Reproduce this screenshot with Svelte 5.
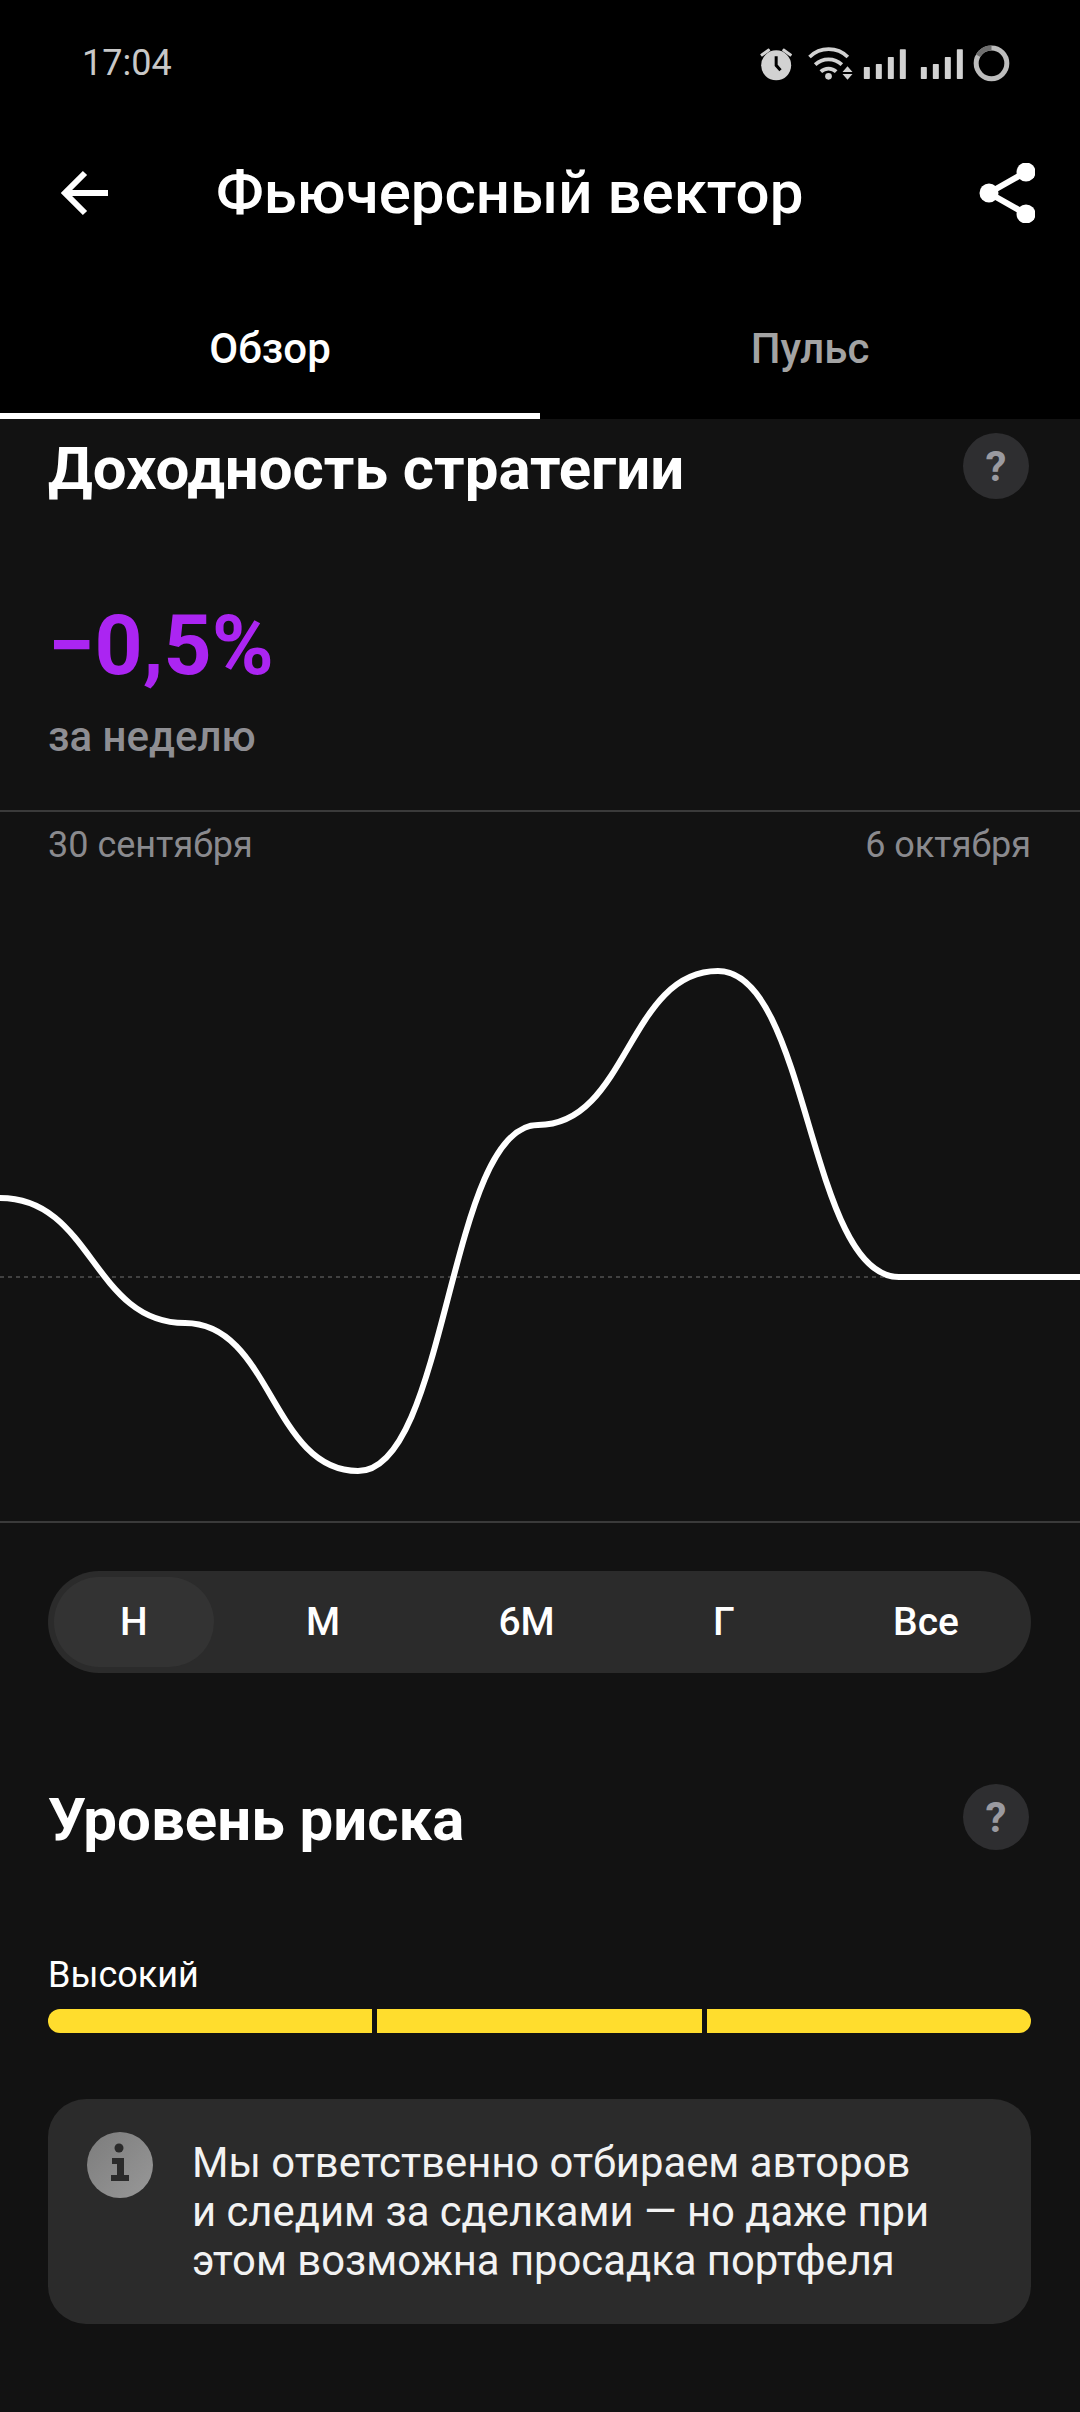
<script>
  const periods = ['Н', 'М', '6М', 'Г', 'Все'];
  const points = [[0,118],[185,243],[358,391],[538,45],[718,-109],[899,197],[1080,197]];
  const curve = points.reduce((d, [x, y], i) => {
    if (i === 0) return `M${x} ${y}`;
    const [px, py] = points[i - 1];
    const k = (x - px) * 0.5;
    return `${d} C${px + k} ${py} ${x - k} ${y} ${x} ${y}`;
  }, '');
</script>

<div class="screen">
  <header class="top">
    <div class="status">
      <span class="time">17:04</span>
      <svg class="status-icons" viewBox="60 60 770 120" aria-hidden="true">
        <g fill="#d2d2d2">
          <circle cx="111" cy="130" r="45"/>
          <rect x="62" y="87" width="32" height="9" rx="2" transform="rotate(-35 78 91)"/>
          <rect x="128" y="87" width="32" height="9" rx="2" transform="rotate(35 144 91)"/>
          <circle cx="268" cy="163" r="10"/>
          <path d="M310 150h30l-15 -17zM310 156h30l-15 17z"/>
          <rect x="374" y="135" width="18" height="36" rx="2"/>
          <rect x="410" y="126" width="18" height="45" rx="2"/>
          <rect x="446" y="105" width="18" height="66" rx="2"/>
          <rect x="482" y="82" width="18" height="89" rx="2"/>
          <rect x="545" y="135" width="18" height="36" rx="2"/>
          <rect x="581" y="126" width="18" height="45" rx="2"/>
          <rect x="617" y="105" width="18" height="66" rx="2"/>
          <rect x="653" y="82" width="18" height="89" rx="2"/>
        </g>
        <path d="M111 103v27l13 15" fill="none" stroke="#000" stroke-width="9"/>
        <g fill="none" stroke="#d2d2d2" stroke-width="11">
          <path d="M211 105a82 82 0 0 1 115 0"/>
          <path d="M228 128a58 58 0 0 1 80 0"/>
          <path d="M245 149a33 33 0 0 1 46 0"/>
        </g>
        <circle cx="757" cy="124" r="46" fill="none" stroke="#bdbdbd" stroke-width="15"/>
        <path d="M717 101a46 46 0 0 1 40 -23" fill="none" stroke="#6e6e6e" stroke-width="15"/>
      </svg>
    </div>
    <div class="nav">
      <svg class="back" viewBox="0 0 48 46" aria-hidden="true">
        <path d="M48 23H5M25 3L5 23l20 20" fill="none" stroke="#fff" stroke-width="6"/>
      </svg>
      <h1>Фьючерсный вектор</h1>
      <svg class="share" viewBox="0 0 56 60" aria-hidden="true">
        <g fill="#fff">
          <circle cx="47" cy="9" r="9.5"/>
          <circle cx="47" cy="51" r="9.5"/>
          <circle cx="10" cy="30" r="9.5"/>
        </g>
        <path d="M47 9L10 30l37 21" fill="none" stroke="#fff" stroke-width="6"/>
      </svg>
    </div>
    <div class="tabs">
      <div class="tab active">Обзор</div>
      <div class="tab">Пульс</div>
    </div>
  </header>

  <section class="yield">
    <div class="head">
      <h2>Доходность стратегии</h2>
      <span class="help">?</span>
    </div>
    <div class="value">−0,5%</div>
    <div class="period">за неделю</div>
  </section>

  <section class="chart">
    <div class="dates"><span>30 сентября</span><span>6 октября</span></div>
    <svg class="plot" viewBox="0 0 1080 420" aria-hidden="true">
      <line x1="0" y1="197" x2="1080" y2="197" stroke="#414141" stroke-width="2" stroke-dasharray="4 4"/>
      <path d={curve} fill="none" stroke="#fff" stroke-width="6"/>
    </svg>
  </section>

  <div class="segments">
    {#each periods as p, i}
      <div class="segment" class:selected={i === 0}>{p}</div>
    {/each}
  </div>

  <section class="risk">
    <div class="head">
      <h2>Уровень риска</h2>
      <span class="help">?</span>
    </div>
    <div class="level">Высокий</div>
    <div class="bar"><i></i><i></i><i></i></div>
  </section>

  <div class="note">
    <svg class="info" viewBox="0 0 66 66" aria-hidden="true">
      <defs>
        <linearGradient id="infoFill" x1="0" y1="0" x2="1" y2="1">
          <stop offset="0" stop-color="#7c7c7c"/>
          <stop offset="1" stop-color="#989898"/>
        </linearGradient>
      </defs>
      <circle cx="33" cy="33" r="33" fill="url(#infoFill)"/>
      <g fill="#2b2b2b">
        <circle cx="32" cy="16" r="4.5"/>
        <path d="M25 26h12v17h5v6H24v-6h6V32h-5z"/>
      </g>
    </svg>
    <p>Мы ответственно отбираем авторов<br/>и следим за сделками — но даже при<br/>этом возможна просадка портфеля</p>
  </div>
</div>

<style>
  :global(body) {
    margin: 0;
    background: #121212;
  }
  .screen {
    width: 1080px;
    height: 2412px;
    overflow: hidden;
    background: #121212;
    color: #fff;
    font-family: Roboto, "Noto Sans", sans-serif;
  }
  .top {
    background: #000;
    height: 419px;
  }
  .status {
    height: 124px;
    padding: 0 64px 0 82px;
    display: flex;
    justify-content: space-between;
    align-items: center;
  }
  .time {
    font-size: 36px;
    color: #c8c8c8;
    padding-top: 2px;
  }
  .status-icons {
    width: 257px;
    height: 40px;
  }
  .nav {
    height: 138px;
    padding: 0 45px 0 60px;
    display: flex;
    align-items: center;
  }
  .back {
    width: 48px;
    height: 46px;
  }
  h1 {
    margin: 0 0 0 108px;
    flex: 1;
    font-size: 60px;
    font-weight: 500;
    line-height: 68px;
  }
  .share {
    width: 56px;
    height: 60px;
  }
  .tabs {
    height: 157px;
    display: flex;
  }
  .tab {
    flex: 1;
    display: flex;
    align-items: center;
    justify-content: center;
    padding-top: 22px;
    box-sizing: border-box;
    font-size: 42px;
    font-weight: 500;
    color: #a3a3a3;
    border-bottom: 6px solid transparent;
  }
  .tab.active {
    color: #fff;
    border-bottom-color: #fff;
  }
  .yield {
    padding: 12px 49px 0 48px;
  }
  .head {
    display: flex;
    justify-content: space-between;
    align-items: center;
    height: 70px;
    padding-right: 2px;
  }
  h2 {
    margin: 0;
    padding-top: 6px;
    font-size: 60px;
    font-weight: 700;
    line-height: 70px;
  }
  .help {
    width: 66px;
    height: 66px;
    border-radius: 50%;
    background: #2e2e30;
    color: #9a9aa0;
    font-size: 42px;
    font-weight: 700;
    display: flex;
    align-items: center;
    justify-content: center;
  }
  .value {
    margin-top: 97px;
    font-size: 84px;
    font-weight: 700;
    line-height: 96px;
    color: #ab25f2;
  }
  .period {
    margin-top: 18px;
    font-size: 42px;
    font-weight: 500;
    line-height: 50px;
    color: #8e8e93;
  }
  .chart {
    margin-top: 48px;
    border-top: 2px solid #3a3a3a;
    border-bottom: 2px solid #3a3a3a;
    height: 709px;
  }
  .dates {
    display: flex;
    justify-content: space-between;
    padding: 13px 49px 0 48px;
    font-size: 36px;
    line-height: 40px;
    color: #8a8a8e;
  }
  .plot {
    display: block;
    width: 1080px;
    height: 420px;
    margin-top: 215px;
    overflow: visible;
  }
  .segments {
    margin: 48px 49px 0 48px;
    height: 102px;
    padding: 6px;
    box-sizing: border-box;
    background: #2b2b2b;
    border-radius: 51px;
    display: flex;
    justify-content: space-between;
  }
  .segment {
    padding: 0 66px;
    border-radius: 45px;
    display: flex;
    align-items: center;
    font-size: 39px;
    font-weight: 500;
  }
  .segment.selected {
    background: #333;
  }
  .risk {
    margin-top: 109px;
    padding: 0 49px 0 48px;
  }
  .level {
    margin-top: 103px;
    font-size: 36px;
    line-height: 40px;
  }
  .bar {
    margin-top: 14px;
    height: 24px;
    display: flex;
    gap: 5px;
  }
  .bar i {
    flex: 1;
    background: #ffdd2d;
  }
  .bar i:first-child {
    border-radius: 12px 0 0 12px;
  }
  .bar i:last-child {
    border-radius: 0 12px 12px 0;
  }
  .note {
    margin: 66px 49px 0 48px;
    height: 225px;
    box-sizing: border-box;
    padding: 33px 30px 0 39px;
    background: #2b2b2b;
    border-radius: 38px;
    display: flex;
    align-items: flex-start;
    gap: 39px;
  }
  .info {
    width: 66px;
    height: 66px;
    flex: none;
  }
  p {
    margin: 6px 0 0;
    font-size: 41.8px;
    line-height: 49px;
    color: #f2f2f2;
  }
</style>
